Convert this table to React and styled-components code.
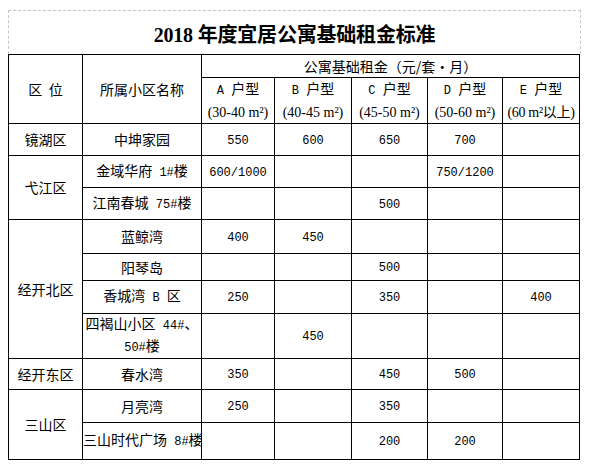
import styled, { createGlobalStyle } from "styled-components";

const GlobalStyle = createGlobalStyle`
  html, body {
    margin: 0;
    background: #fff;
  }
  body {
    font-family: "Noto Sans CJK SC", sans-serif;
    color: #000;
  }
`;

const Page = styled.div`
  padding: 10px 0 0 8px;
`;

const TitleBox = styled.div`
  box-sizing: border-box;
  width: 573px;
  height: 44px;
  border: 1px dashed #c4c4c4;
  border-bottom: none;
  display: flex;
  align-items: center;
  justify-content: center;
`;

const Title = styled.h1`
  margin: 0;
  padding-top: 2px;
  font-family: "Liberation Serif", "Noto Sans CJK SC", serif;
  font-weight: bold;
  font-size: 20px;
  letter-spacing: -0.2px;
`;

const Table = styled.table`
  border-collapse: collapse;
  table-layout: fixed;
  width: 572px;
`;

const Row = styled.tr`
  height: ${(p) => p.h}px;
`;

const Cell = styled.td`
  border: 1px solid #000;
  padding: 0;
  text-align: center;
  vertical-align: middle;
  font-size: 14px;
  line-height: 19px;
  white-space: ${(p) => (p.$nowrap ? "nowrap" : "normal")};
  overflow: visible;
`;

const HeadCell = styled(Cell)`
  line-height: 20px;
`;

const Num = styled.span`
  font-family: "Liberation Mono", monospace;
  font-size: 12px;
`;

const Range = styled.span`
  font-family: "Liberation Serif", "Noto Sans CJK SC", serif;
  font-size: 14px;
  letter-spacing: ${(p) => (p.$tight ? "-0.3px" : "0")};
`;

const widths = [74, 119, 73, 77, 76, 75, 77];

const types = [
  ["A", "(30-40 m²)"],
  ["B", "(40-45 m²)"],
  ["C", "(45-50 m²)"],
  ["D", "(50-60 m²)"],
  ["E", "(60 m²以上)"],
];

// [district, rowspan, name, prices[5], height]
const rows = [
  ["镜湖区", 1, "中坤家园", ["550", "600", "650", "700", ""], 32],
  ["弋江区", 2, <>金域华府<Num> 1#</Num>楼</>, ["600/1000", "", "", "750/1200", ""], 32],
  [null, 0, <>江南春城<Num> 75#</Num>楼</>, ["", "", "500", "", ""], 32],
  ["经开北区", 4, "蓝鲸湾", ["400", "450", "", "", ""], 34],
  [null, 0, "阳琴岛", ["", "", "500", "", ""], 27],
  [null, 0, <>香城湾<Num> B </Num>区</>, ["250", "", "350", "", "400"], 33],
  [null, 0, <>四褐山小区<Num> 44#</Num>、<br /><Num>50#</Num>楼</>, ["", "450", "", "", ""], 45],
  ["经开东区", 1, "春水湾", ["350", "", "450", "500", ""], 31],
  ["三山区", 2, "月亮湾", ["250", "", "350", "", ""], 33],
  [null, 0, <>三山时代广场<Num> 8#</Num>楼</>, ["", "", "200", "200", ""], 37],
];

export default function App() {
  return (
    <Page>
      <GlobalStyle />
      <TitleBox>
        <Title>2018 年度宜居公寓基础租金标准</Title>
      </TitleBox>
      <Table>
        <colgroup>
          {widths.map((w, i) => (
            <col key={i} style={{ width: w }} />
          ))}
        </colgroup>
        <tbody>
          <Row h={23}>
            <HeadCell rowSpan={2}>区&nbsp;&nbsp;位</HeadCell>
            <HeadCell rowSpan={2}>所属小区名称</HeadCell>
            <HeadCell colSpan={5}>公寓基础租金（元/套·月）</HeadCell>
          </Row>
          <Row h={45}>
            {types.map(([t, r]) => (
              <HeadCell key={t} $nowrap>
                <Num>{t} </Num>户型
                <br />
                <Range $tight={t === "E"}>{r}</Range>
              </HeadCell>
            ))}
          </Row>
          {rows.map(([district, span, name, prices, h], i) => (
            <Row key={i} h={h}>
              {district && <Cell rowSpan={span}>{district}</Cell>}
              <Cell $nowrap={i === rows.length - 1}>{name}</Cell>
              {prices.map((p, j) => (
                <Cell key={j}>
                  <Num>{p}</Num>
                </Cell>
              ))}
            </Row>
          ))}
        </tbody>
      </Table>
    </Page>
  );
}
